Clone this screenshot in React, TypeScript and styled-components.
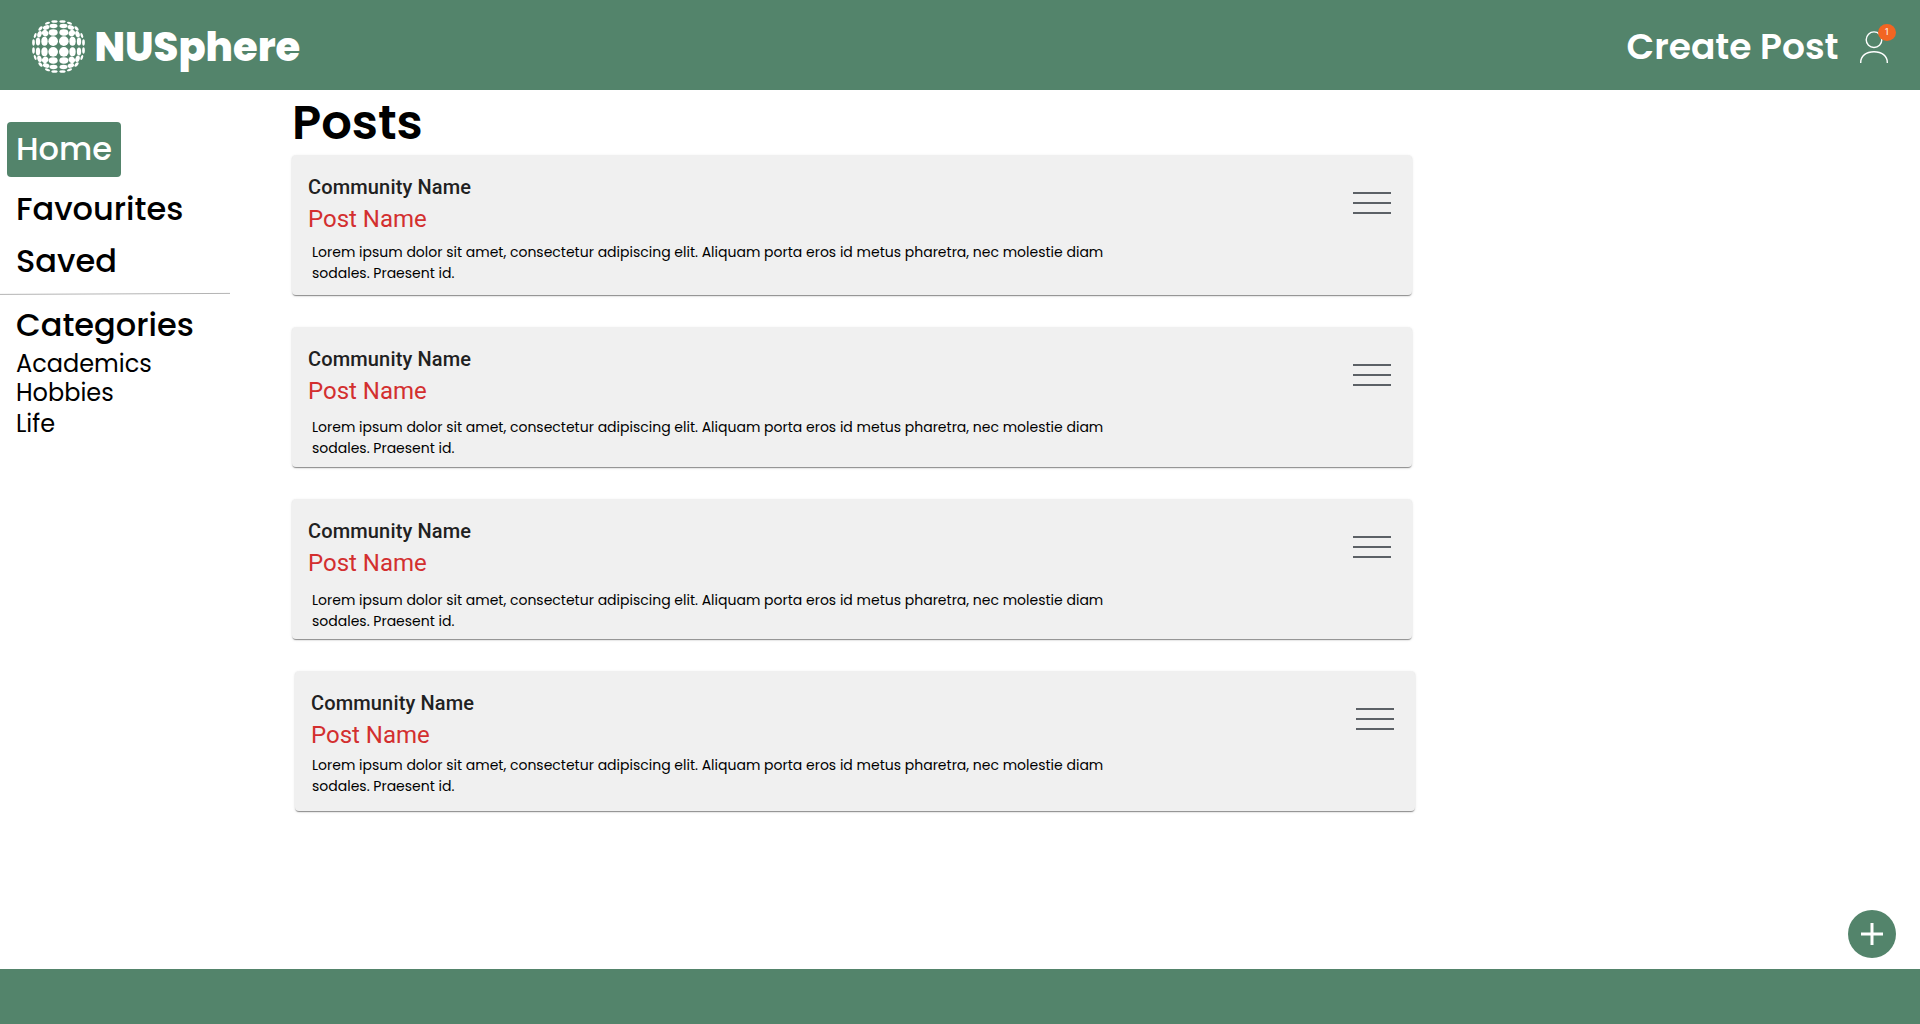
import React from "react";
import styled, { createGlobalStyle } from "styled-components";

const green = "#53846b";

const GlobalStyle = createGlobalStyle`
  * { box-sizing: border-box; }
  body {
    margin: 0;
    background: #fff;
    color: #000;
    font-family: Poppins, Inter, "Open Sans", sans-serif;
  }
`;

const Page = styled.div`
  display: flex;
  flex-direction: column;
  height: 1024px;
  overflow: hidden;
`;

const Header = styled.header`
  display: flex;
  align-items: center;
  flex: 0 0 90px;
  padding: 3px 24px 0 32px;
  background: ${green};
  color: #fff;
`;

const Brand = styled.a`
  display: flex;
  align-items: center;
  gap: 9.5px;
`;

const BrandName = styled.span`
  padding-top: 2px;
  font-size: 40px;
  line-height: 53px;
  font-weight: 800;
`;

const CreatePost = styled.a`
  margin-left: auto;
  font-size: 36px;
  line-height: 44px;
  font-weight: 600;
`;

const Account = styled.button`
  position: relative;
  width: 36px;
  height: 40px;
  margin: 0 0 5px 21.5px;
  padding: 0;
  border: 0;
  background: none;
`;

const Badge = styled.span`
  position: absolute;
  top: 0;
  right: 0;
  width: 18px;
  height: 17px;
  border-radius: 50%;
  background: #f26522;
  color: #fff;
  font: 400 9px/17px Roboto, sans-serif;
  text-align: center;
`;

const Body = styled.div`
  display: grid;
  grid-template-columns: 292px 1123px 1fr;
  flex: 1;
  min-height: 0;
`;

const Sidebar = styled.nav`
  display: flex;
  flex-direction: column;
  align-items: flex-start;
  padding-top: 32px;
`;

const NavLink = styled.a<{ $gap: number }>`
  margin: ${(p) => p.$gap}px 0 0 16px;
  font-size: 32px;
  line-height: 40px;
  font-weight: 500;
`;

const ActiveLink = styled.a`
  width: 114px;
  height: 55px;
  margin-left: 7px;
  padding-left: 9px;
  border-radius: 4px;
  background: ${green};
  color: #fff;
  font-size: 32px;
  line-height: 53px;
  font-weight: 500;
`;

const Rule = styled.svg`
  display: block;
  margin-top: 11px;
`;

const CategoryLink = styled.a<{ $gap: number }>`
  margin: ${(p) => p.$gap}px 0 0 16px;
  font-size: 24px;
  line-height: 29px;
`;

const Feed = styled.main`
  display: flex;
  flex-direction: column;
`;

const Title = styled.h1`
  margin: 0;
  font-size: 48px;
  line-height: 65px;
  font-weight: 600;
`;

const CardList = styled.div`
  display: flex;
  flex-direction: column;
  gap: 32px;
`;

const Card = styled.article<{ $shift: number }>`
  display: flex;
  justify-content: space-between;
  width: 1120px;
  height: 140px;
  margin-left: ${(p) => p.$shift}px;
  padding: 16px 21px 0 16px;
  border-radius: 4px;
  background: #f0f0f0;
  box-shadow: 0 2px 1px -1px rgba(0, 0, 0, 0.28), 0 1px 1px rgba(0, 0, 0, 0.16),
    0 1px 3px rgba(0, 0, 0, 0.12);
`;

const Community = styled.h2`
  margin: 0;
  color: #212121;
  font: 500 20px/32px Roboto, sans-serif;
  letter-spacing: 0.15px;
`;

const PostName = styled.h3`
  margin: 0;
  color: #d32f2f;
  font: 400 24px/32px Roboto, sans-serif;
`;

const Excerpt = styled.p<{ $gap: number; $indent: number }>`
  width: 800px;
  margin: ${(p) => p.$gap}px 0 0 ${(p) => p.$indent}px;
  font-size: 14px;
  line-height: 21px;
`;

const MenuButton = styled.button`
  display: flex;
  flex-direction: column;
  gap: 8px;
  width: 38px;
  margin: 21px 0 0;
  padding: 0;
  border: 0;
  background: none;
`;

const MenuBar = styled.span`
  height: 2px;
  width: 100%;
  background: #5c6166;
`;

const Actions = styled.aside`
  display: flex;
  align-items: flex-end;
  justify-content: flex-end;
  padding: 0 24px 11px 0;
`;

const AddButton = styled.button`
  display: grid;
  place-items: center;
  width: 48px;
  height: 48px;
  padding: 0;
  border: 0;
  border-radius: 50%;
  background: ${green};
`;

const Footer = styled.footer`
  flex: 0 0 55px;
  background: ${green};
`;

// One quadrant of the globe: x, y, rx, ry, rotation.
const dots = [
  [16, 16, 14.5, 14.5, 0],
  [42, 16, 9.5, 13.5, 0],
  [61.5, 15, 6.5, 12, 0],
  [75, 12, 4, 9.5, 0],
  [16, 42, 13.5, 9.5, 0],
  [40, 40, 10, 9, 45],
  [57, 37, 6.5, 10, 18],
  [15, 61.5, 12, 6.5, 0],
  [37, 57, 10, 6.5, -18],
  [54, 54, 8, 4.5, -45],
  [12, 75, 9.5, 4, 0],
  [33, 70, 8, 3.5, -20],
  [70, 33, 3.5, 8, 20],
];

const quadrants = ["", "scale(-1 1)", "scale(1 -1)", "scale(-1 -1)"];

function Globe() {
  return (
    <svg width="53" height="53" viewBox="-79.5 -79.5 159 159" fill="#fff">
      {quadrants.map((flip) => (
        <g key={flip} transform={flip}>
          {dots.map(([x, y, rx, ry, turn]) => (
            <ellipse
              key={`${x}-${y}`}
              rx={rx}
              ry={ry}
              transform={`translate(${x} ${y}) rotate(${turn})`}
            />
          ))}
        </g>
      ))}
    </svg>
  );
}

function UserIcon() {
  return (
    <svg width="36" height="40" viewBox="0 0 36 40" fill="none" stroke="#fff" strokeWidth="1.4">
      <circle cx="14" cy="15.7" r="7.8" />
      <path d="M.7 39v-.6C.7 31.8 6.2 27.8 14 27.8s13.3 4 13.3 10.6v.6" />
    </svg>
  );
}

const posts = [
  { gap: 7, shift: 0, indent: 4 },
  { gap: 10, shift: 0, indent: 4 },
  { gap: 11, shift: 0, indent: 4 },
  { gap: 4, shift: 3, indent: 1 },
];

export default function App() {
  return (
    <Page>
      <GlobalStyle />
      <Header>
        <Brand>
          <Globe />
          <BrandName>NUSphere</BrandName>
        </Brand>
        <CreatePost>Create Post</CreatePost>
        <Account aria-label="Account">
          <UserIcon />
          <Badge>1</Badge>
        </Account>
      </Header>
      <Body>
        <Sidebar>
          <ActiveLink>Home</ActiveLink>
          <NavLink $gap={12}>Favourites</NavLink>
          <NavLink $gap={12}>Saved</NavLink>
          <Rule width="230" height="4" viewBox="0 0 230 4">
            <line x1="0" y1="2.4" x2="230" y2="1.4" stroke="#b4b4b4" />
          </Rule>
          <NavLink $gap={9}>Categories</NavLink>
          <CategoryLink $gap={4}>Academics</CategoryLink>
          <CategoryLink $gap={0}>Hobbies</CategoryLink>
          <CategoryLink $gap={2}>Life</CategoryLink>
        </Sidebar>
        <Feed>
          <Title>Posts</Title>
          <CardList>
            {posts.map((post, i) => (
              <Card key={i} $shift={post.shift}>
                <div>
                  <Community>Community Name</Community>
                  <PostName>Post Name</PostName>
                  <Excerpt $gap={post.gap} $indent={post.indent}>
                    Lorem ipsum dolor sit amet, consectetur adipiscing elit. Aliquam porta eros id
                    metus pharetra, nec molestie diam sodales. Praesent id.
                  </Excerpt>
                </div>
                <MenuButton aria-label="Post menu">
                  <MenuBar />
                  <MenuBar />
                  <MenuBar />
                </MenuButton>
              </Card>
            ))}
          </CardList>
        </Feed>
        <Actions>
          <AddButton aria-label="Add">
            <svg width="22" height="22" viewBox="0 0 22 22" stroke="#fff" strokeWidth="3">
              <path d="M11 0v22M0 11h22" />
            </svg>
          </AddButton>
        </Actions>
      </Body>
      <Footer />
    </Page>
  );
}
